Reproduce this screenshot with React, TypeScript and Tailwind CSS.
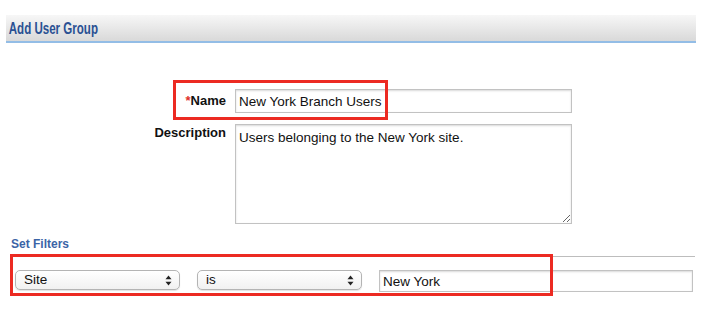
import React from 'react';

function Arrows() {
  return (
    <svg width="7" height="11" viewBox="0 0 7 11" className="shrink-0">
      <path d="M3.5 0.5 L6.5 4.3 L0.5 4.3 Z" fill="#222" />
      <path d="M3.5 10.5 L6.5 6.7 L0.5 6.7 Z" fill="#222" />
    </svg>
  );
}

function FakeSelect({ label, width }: { label: string; width: string }) {
  return (
    <div
      className={`${width} h-[20px] flex items-center justify-between pl-[8px] pr-[7px] rounded-[5px] border border-[#b4b4b4] bg-gradient-to-b from-white to-[#f1f1f1] shadow-[0_1px_1px_rgba(0,0,0,0.12)] text-[13.5px] leading-[16px] text-[#111]`}
    >
      <span>{label}</span>
      <Arrows />
    </div>
  );
}

export default function App() {
  const font = { fontFamily: '"Liberation Sans", Arial, sans-serif' };
  return (
    <div className="relative w-[706px] h-[311px] bg-white overflow-hidden" style={font}>
      {/* Header bar */}
      <div className="mt-[15px] ml-[6px] w-[690px] h-[28px] flex items-center border-b-2 border-[#93bde6] bg-gradient-to-b from-[#f7f7f7] to-[#d9d9d9]">
        <h1 className="pl-[4px] pt-[1px] text-[17px] leading-[18px] font-bold text-[#2a5193] origin-left scale-x-[0.68] whitespace-nowrap">
          Add User Group
        </h1>
      </div>

      {/* Name */}
      <div className="mt-[46px] flex items-center">
        <label className="w-[226px] text-right text-[13px] leading-[16px] font-bold text-[#111]">
          <span className="text-[#e0302a]">*</span>Name
        </label>
        <input
          readOnly
          defaultValue="New York Branch Users"
          className="ml-[9px] w-[337px] h-[24px] px-[3px] border border-[#c2c2c2] shadow-[inset_0_1px_2px_rgba(0,0,0,0.15)] text-[13.5px] text-[#111] outline-none"
        />
      </div>

      {/* Description */}
      <div className="mt-[11px] flex items-start">
        <label className="w-[226px] pt-[1px] text-right text-[13px] leading-[16px] font-bold text-[#111]">Description</label>
        <textarea
          readOnly
          defaultValue="Users belonging to the New York site."
          className="ml-[9px] w-[337px] h-[100px] px-[3px] py-[4px] border border-[#c2c2c2] shadow-[inset_0_1px_2px_rgba(0,0,0,0.15)] text-[13.5px] leading-[17px] text-[#111] outline-none"
        />
      </div>

      {/* Set Filters */}
      <div className="mt-[12px] ml-[10px] w-[685px] pb-[4px] border-b border-[#bdbdbd] text-[12px] leading-[16px]">
        <span className="pl-[1px] font-bold text-[#3b64a6]">Set Filters</span>
      </div>

      <div className="mt-[13px] ml-[15px] flex items-start gap-[17px]">
        <FakeSelect label="Site" width="w-[165px]" />
        <FakeSelect label="is" width="w-[165px]" />
        <input
          readOnly
          defaultValue="New York"
          className="w-[314px] h-[22px] px-[3px] border border-[#c2c2c2] shadow-[inset_0_1px_2px_rgba(0,0,0,0.15)] text-[13.5px] text-[#111] outline-none"
        />
      </div>

      {/* Red annotation boxes */}
      <div className="absolute left-[173px] top-[80px] w-[215px] h-[40px] border-[3px] border-[#ec2a22] pointer-events-none" />
      <div className="absolute left-[10px] top-[254px] w-[543px] h-[42px] border-[3px] border-[#ec2a22] pointer-events-none" />
    </div>
  );
}
